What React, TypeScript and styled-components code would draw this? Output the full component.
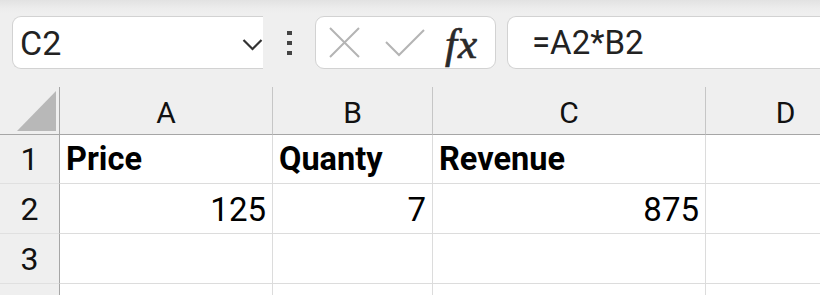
import React from "react";
import styled, { createGlobalStyle } from "styled-components";

const Global = createGlobalStyle`
  html, body { margin: 0; padding: 0; background: #efefef; }
  body { width: 820px; height: 295px; overflow: hidden; font-family: Roboto, "Noto Sans", sans-serif; }
`;

const Page = styled.div`
  width: 820px;
  height: 295px;
  overflow: hidden;
  background: linear-gradient(#e2e2e2 0px, #ececec 8px, #efefef 14px);
`;

const Toolbar = styled.div`
  display: flex;
  align-items: center;
  height: 87px;
  box-sizing: border-box;
  padding: 16px 0 18px 12px;
`;

const NameBox = styled.div`
  width: 251px;
  height: 53px;
  box-sizing: border-box;
  background: #fff;
  border: 1px solid #d2d2d2;
  border-right: none;
  border-radius: 9px 0 0 9px;
  display: flex;
  align-items: center;
  justify-content: space-between;
  padding-left: 7px;
  font-size: 34px;
  color: #222;
`;

const Chevron = styled.svg`
  width: 21px;
  height: 14px;
  margin-top: 4px;
`;

const Grip = styled.div`
  width: 5px;
  margin: 0 23px 0 24px;
  display: flex;
  flex-direction: column;
  gap: 6px;
  span {
    display: block;
    width: 5px;
    height: 4px;
    background: #444;
  }
`;

const ButtonBox = styled.div`
  width: 181px;
  height: 53px;
  box-sizing: border-box;
  background: #fff;
  border: 1px solid #d2d2d2;
  border-radius: 9px;
  display: flex;
  align-items: center;
  padding-left: 13px;
`;

const IconSvg = styled.svg<{ $ml?: number }>`
  margin-left: ${(p) => p.$ml ?? 0}px;
  flex: none;
`;

const Fx = styled.span`
  font-family: "Liberation Serif", "DejaVu Serif", serif;
  font-style: italic;
  font-size: 43px;
  color: #2a2a2a;
  -webkit-text-stroke: 0.7px #2a2a2a;
  margin-left: 20px;
  letter-spacing: 1px;
  line-height: 1;
  margin-top: 2px;
`;

const FormulaBox = styled.div`
  flex: 1;
  height: 53px;
  margin-left: 11px;
  box-sizing: border-box;
  background: #fff;
  border: 1px solid #d2d2d2;
  border-right: none;
  border-radius: 9px 0 0 9px;
  display: flex;
  align-items: center;
  padding-left: 24px;
  font-size: 33px;
  color: #222;
`;

const Grid = styled.div`
  display: grid;
  grid-template-columns: 60px 213px 160px 273px 160px;
  grid-template-rows: 48px 49px 50px 50px 50px;
  width: 866px;
  background: #fff;
`;

const HeadCell = styled.div<{ $corner?: boolean }>`
  background: #efefef;
  border-right: 1px solid ${(p) => (p.$corner ? "#a6a6a6" : "#c6c6c6")};
  border-bottom: 1px solid #a6a6a6;
  display: flex;
  align-items: flex-end;
  justify-content: center;
  padding-bottom: 4px;
  font-size: 30px;
  color: #111;
  box-sizing: border-box;
  position: relative;
`;

const Corner = styled.div`
  position: absolute;
  left: 17px;
  bottom: 3px;
  width: 39px;
  height: 40px;
  background: #b8b8b8;
  clip-path: polygon(100% 0, 100% 100%, 0 100%);
`;

const RowHead = styled.div`
  background: #efefef;
  border-right: 1px solid #a6a6a6;
  border-bottom: 1px solid #e0e0e0;
  display: flex;
  align-items: center;
  justify-content: center;
  font-size: 32px;
  color: #111;
  box-sizing: border-box;
`;

const Cell = styled.div<{ $num?: boolean; $bold?: boolean }>`
  border-right: 1px solid #dcdcdc;
  border-bottom: 1px solid #dcdcdc;
  display: flex;
  align-items: center;
  justify-content: ${(p) => (p.$num ? "flex-end" : "flex-start")};
  padding: ${(p) => (p.$num ? "2px 6px 0 0" : "0 0 0 6px")};
  font-size: ${(p) => (p.$bold ? "32.5px" : "33px")};
  font-weight: ${(p) => (p.$bold ? 700 : 400)};
  color: #000;
  box-sizing: border-box;
  white-space: nowrap;
  overflow: hidden;
`;

const cols = ["A", "B", "C", "D"];
const rows: { v: string; num?: boolean; bold?: boolean }[][] = [
  [{ v: "Price", bold: true }, { v: "Quanty", bold: true }, { v: "Revenue", bold: true }, { v: "" }],
  [{ v: "125", num: true }, { v: "7", num: true }, { v: "875", num: true }, { v: "" }],
  [{ v: "" }, { v: "" }, { v: "" }, { v: "" }],
  [{ v: "" }, { v: "" }, { v: "" }, { v: "" }],
];

export default function App() {
  return (
    <Page>
      <Global />
      <Toolbar>
        <NameBox>
          <span>C2</span>
          <Chevron viewBox="0 0 21 14">
            <path d="M1.5 2 L10.5 11 L19.5 2" fill="none" stroke="#333" strokeWidth="2.2" />
          </Chevron>
        </NameBox>
        <Grip>
          <span />
          <span />
          <span />
        </Grip>
        <ButtonBox>
          <IconSvg width="31" height="31" viewBox="0 0 31 31">
            <path d="M1 1 L30 30 M30 1 L1 30" stroke="#b4b4b4" strokeWidth="2" fill="none" />
          </IconSvg>
          <IconSvg $ml={25} width="40" height="28" viewBox="0 0 40 28">
            <path d="M1 13 L14 26 L39 1" stroke="#b4b4b4" strokeWidth="2" fill="none" />
          </IconSvg>
          <Fx>fx</Fx>
        </ButtonBox>
        <FormulaBox>=A2*B2</FormulaBox>
      </Toolbar>
      <Grid>
        <HeadCell $corner>
          <Corner />
        </HeadCell>
        {cols.map((c) => (
          <HeadCell key={c}>{c}</HeadCell>
        ))}
        {rows.map((r, i) => (
          <React.Fragment key={i}>
            <RowHead>{i + 1 <= 3 ? i + 1 : ""}</RowHead>
            {r.map((cell, j) => (
              <Cell key={j} $num={cell.num} $bold={cell.bold}>
                {cell.v}
              </Cell>
            ))}
          </React.Fragment>
        ))}
      </Grid>
    </Page>
  );
}
